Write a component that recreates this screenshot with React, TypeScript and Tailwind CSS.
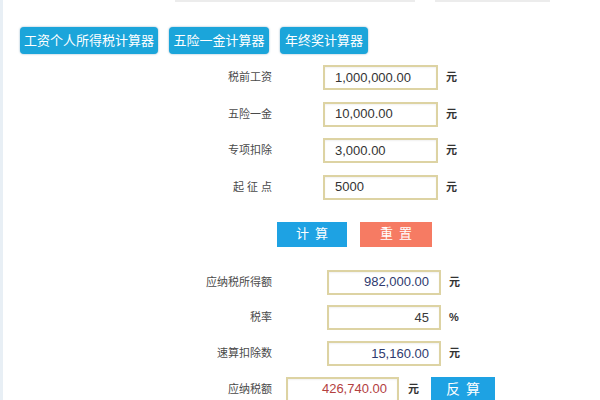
const FONT = '"Liberation Sans", "Noto Sans CJK SC", sans-serif';

const INPUTS = [
  { label: '税前工资', value: '1,000,000.00' },
  { label: '五险一金', value: '10,000.00' },
  { label: '专项扣除', value: '3,000.00' },
  { label: '起 征 点', value: '5000' },
];

const RESULTS = [
  { label: '应纳税所得额', value: '982,000.00', unit: '元', color: 'text-[#2e3a6e]' },
  { label: '税率', value: '45', unit: '%', color: 'text-[#3a3a3a]' },
  { label: '速算扣除数', value: '15,160.00', unit: '元', color: 'text-[#2e3a6e]' },
];

function Field({ value, align, color, width }: { value: string; align: 'left' | 'right'; color: string; width: string }) {
  return (
    <div
      className={`${width} h-[25px] border-2 border-[#ddd3a3] bg-white flex items-center px-[10px] text-[13px] shadow-[inset_0_1px_2px_rgba(0,0,0,0.06)] ${
        align === 'right' ? 'justify-end' : 'justify-start'
      } ${color}`}
    >
      {value}
    </div>
  );
}

export default function App() {
  return (
    <div
      className="w-[600px] h-[400px] bg-white overflow-hidden border-l-[3px] border-[#e8eff5] text-[#333]"
      style={{ fontFamily: FONT }}
    >
      {/* bottom edge of the page title, scrolled off */}
      <div className="h-[4px] flex items-start pl-[172px] gap-[20px]">
        <div className="w-[240px] h-[2px] bg-[#ececec]" />
        <div className="w-[115px] h-[2px] bg-[#ececec]" />
      </div>

      {/* ─── Tabs ─── */}
      <div className="flex gap-[11px] pl-[17px] mt-[23px]">
        <button className="w-[138px] h-[27px] rounded-[4px] bg-[#1ba5da] text-white text-[13px] shadow-[0_0_2px_rgba(0,90,140,0.5)]">
          工资个人所得税计算器
        </button>
        <button className="w-[100px] h-[27px] rounded-[4px] bg-[#1ba5da] text-white text-[13px] shadow-[0_0_2px_rgba(0,90,140,0.5)]">
          五险一金计算器
        </button>
        <button className="w-[88px] h-[27px] rounded-[4px] bg-[#1ba5da] text-white text-[13px] shadow-[0_0_2px_rgba(0,90,140,0.5)]">
          年终奖计算器
        </button>
      </div>

      {/* ─── Inputs ─── */}
      <div className="flex flex-col gap-[11.5px] mt-[11px]">
        {INPUTS.map(row => (
          <div key={row.label} className="flex items-center">
            <div className="w-[269px] text-right text-[11px] text-[#4a4a4a]">{row.label}</div>
            <div className="ml-[51px]">
              <Field value={row.value} align="left" color="text-[#333]" width="w-[115px]" />
            </div>
            <div className="ml-[8px] text-[11px] font-bold text-[#333]">元</div>
          </div>
        ))}
      </div>

      {/* ─── Actions ─── */}
      <div className="flex gap-[13px] pl-[274px] mt-[22px]">
        <button className="w-[70px] h-[25px] bg-[#1ea2e3] text-white text-[13px] tracking-[6px] pl-[6px]">计算</button>
        <button className="w-[72px] h-[25px] bg-[#f67b63] text-white text-[13px] tracking-[6px] pl-[6px]">重置</button>
      </div>

      {/* ─── Results ─── */}
      <div className="flex flex-col gap-[10.7px] mt-[23px]">
        {RESULTS.map(row => (
          <div key={row.label} className="flex items-center">
            <div className="w-[269px] text-right text-[11px] text-[#4a4a4a]">{row.label}</div>
            <div className="ml-[55px]">
              <Field value={row.value} align="right" color={row.color} width="w-[114px]" />
            </div>
            <div className="ml-[8px] text-[11px] font-bold text-[#333]">{row.unit}</div>
          </div>
        ))}
        <div className="flex items-center">
          <div className="w-[269px] text-right text-[11px] text-[#4a4a4a]">应纳税额</div>
          <div className="ml-[14px]">
            <Field value="426,740.00" align="right" color="text-[#b3413f]" width="w-[113px]" />
          </div>
          <div className="ml-[9px] text-[11px] font-bold text-[#333]">元</div>
          <button className="ml-[12px] w-[64px] h-[25px] bg-[#1ea2e3] text-white text-[14px] tracking-[6px] pl-[6px]">反算</button>
        </div>
      </div>
    </div>
  );
}
